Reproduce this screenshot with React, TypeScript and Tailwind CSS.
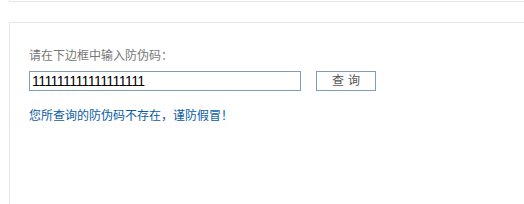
import React from "react";

export default function App() {
  return (
    <div className="w-[524px] h-[204px] bg-white overflow-hidden" style={{ fontFamily: '"Liberation Sans", "Noto Sans CJK SC", sans-serif' }}>
      <div className="ml-[9px] h-[2px] border-l border-b border-[#e4e4e4]" />
      <div className="ml-[9px] mt-[20px] h-[190px] border-l border-t border-[#e4e4e4] pl-[19px] pt-[24px]">
        <div className="text-[12px] leading-[18px] text-[#777777]">请在下边框中输入防伪码：</div>
        <div className="mt-[6px] flex items-center">
          <div className="w-[272px] h-[20px] border border-[#7f9db9] flex items-center pl-[2px] text-[14px] tracking-[-0.55px] text-black leading-none">
            111111111111111111
          </div>
          <div className="ml-[15px] w-[60px] h-[20px] border border-[#7f9db9] flex items-center justify-center text-[12px] text-[#555555] tracking-[4px] pl-[4px]">
            查询
          </div>
        </div>
        <div className="mt-[16px] text-[12px] leading-[18px] text-[#0a5ca6]">您所查询的防伪码不存在，谨防假冒！</div>
      </div>
    </div>
  );
}
